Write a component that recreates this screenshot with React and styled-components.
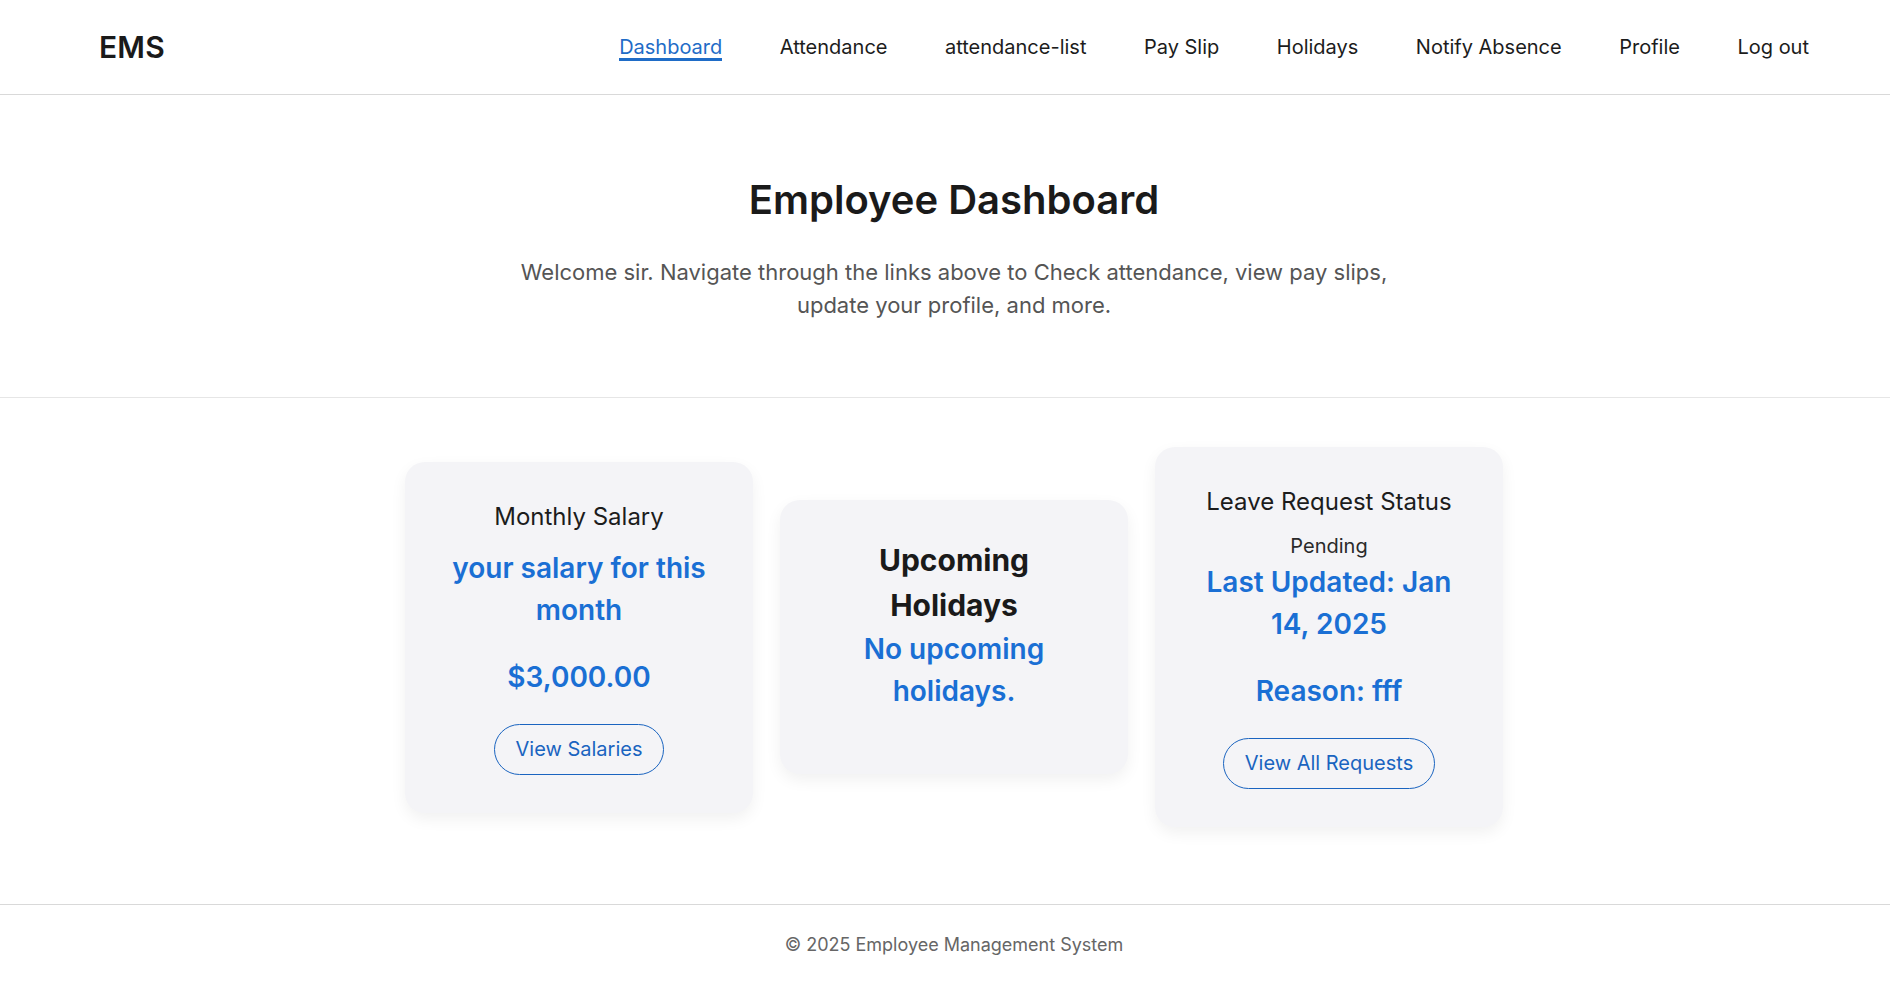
import React from "react";
import styled, { createGlobalStyle } from "styled-components";

const GlobalStyle = createGlobalStyle`
  html, body {
    margin: 0;
    padding: 0;
    overflow-x: hidden;
    background: #ffffff;
  }
  body {
    font-family: Inter, "Noto Sans", "Liberation Sans", sans-serif;
    color: #1c1c1c;
  }
  * {
    box-sizing: border-box;
  }
`;

const links = [
  "Dashboard",
  "Attendance",
  "attendance-list",
  "Pay Slip",
  "Holidays",
  "Notify Absence",
  "Profile",
  "Log out",
];

const App = () => {
  return (
    <>
      <GlobalStyle />
      <Page>
        <Header>
          <Logo>EMS</Logo>
          <Nav>
            {links.map((l, i) => (
              <NavLink key={l} $active={i === 0}>
                {l}
              </NavLink>
            ))}
          </Nav>
        </Header>

        <Hero>
          <Title>Employee Dashboard</Title>
          <Intro>
            Welcome sir. Navigate through the links above to Check attendance,
            view pay slips, update your profile, and more.
          </Intro>
        </Hero>

        <Cards>
          <Card>
            <CardTitle>Monthly Salary</CardTitle>
            <Value>your salary for this month</Value>
            <Value $spaced>$3,000.00</Value>
            <OutlineButton>View Salaries</OutlineButton>
          </Card>

          <Card>
            <BigTitle>Upcoming Holidays</BigTitle>
            <Value $last>No upcoming holidays.</Value>
          </Card>

          <Card>
            <CardTitle>Leave Request Status</CardTitle>
            <Status>Pending</Status>
            <Value>Last Updated: Jan 14, 2025</Value>
            <Value $spaced>Reason: fff</Value>
            <OutlineButton>View All Requests</OutlineButton>
          </Card>
        </Cards>

        <Footer>© 2025 Employee Management System</Footer>
      </Page>
    </>
  );
};

const Page = styled.div`
  width: calc(100% + 18px);
  min-height: 100vh;
  display: flex;
  flex-direction: column;
`;

const Header = styled.header`
  height: 95px;
  display: flex;
  align-items: center;
  justify-content: space-between;
  padding: 0 99px;
  border-bottom: 1px solid #d9d9d9;
`;

const Logo = styled.div`
  font-size: 30px;
  font-weight: 600;
  color: #1a1a1a;
  letter-spacing: 0.2px;
`;

const Nav = styled.nav`
  display: flex;
  align-items: center;
  gap: 57.5px;
`;

const NavLink = styled.a`
  font-size: 20px;
  line-height: 22px;
  color: ${(p) => (p.$active ? "#1f6cc7" : "#1c1c1c")};
  border-bottom: 3px solid ${(p) => (p.$active ? "#1f6cc7" : "transparent")};
  padding-top: 3px;
  cursor: pointer;
`;

const Hero = styled.section`
  text-align: center;
  padding: 81px 0 75px;
  border-bottom: 1px solid #e6e6e6;
`;

const Title = styled.h1`
  margin: 0 0 32px;
  font-size: 40px;
  line-height: 48px;
  font-weight: 600;
  color: #1a1a1a;
`;

const Intro = styled.p`
  margin: 0 auto;
  max-width: 900px;
  font-size: 22px;
  line-height: 33px;
  color: #555555;
`;

const Cards = styled.section`
  display: flex;
  justify-content: center;
  align-items: center;
  gap: 27px;
  padding: 49px 0 77px;
  border-bottom: 1px solid #d9d9d9;
`;

const Card = styled.div`
  width: 348px;
  padding: 38px 36px;
  background: #f4f4f7;
  border-radius: 20px;
  box-shadow: 0 6px 16px rgba(0, 0, 0, 0.06);
  text-align: center;
`;

const CardTitle = styled.h3`
  margin: 0 0 14px;
  font-size: 24px;
  line-height: 33px;
  font-weight: 400;
  color: #1c1c1c;
`;

const BigTitle = styled.h2`
  margin: 0;
  font-size: 30px;
  line-height: 45px;
  font-weight: 700;
  color: #1a1a1a;
`;

const Status = styled.p`
  margin: 0;
  font-size: 20px;
  line-height: 29px;
  color: #2a2a2a;
`;

const Value = styled.p`
  margin: ${(p) => (p.$spaced ? "25px 0 0" : "0")};
  margin-bottom: ${(p) => (p.$last ? "24px" : "0")};
  font-size: 28px;
  line-height: 42px;
  font-weight: 600;
  color: #1a6fd4;
`;

const OutlineButton = styled.button`
  margin-top: 26px;
  padding: 10px 21px;
  font-family: inherit;
  font-size: 20px;
  line-height: 29px;
  color: #1a64c0;
  background: transparent;
  border: 1px solid #1a64c0;
  border-radius: 999px;
  cursor: pointer;
`;

const Footer = styled.footer`
  text-align: center;
  padding: 26px 0;
  font-size: 18px;
  line-height: 27px;
  color: #666666;
`;

export default App;
